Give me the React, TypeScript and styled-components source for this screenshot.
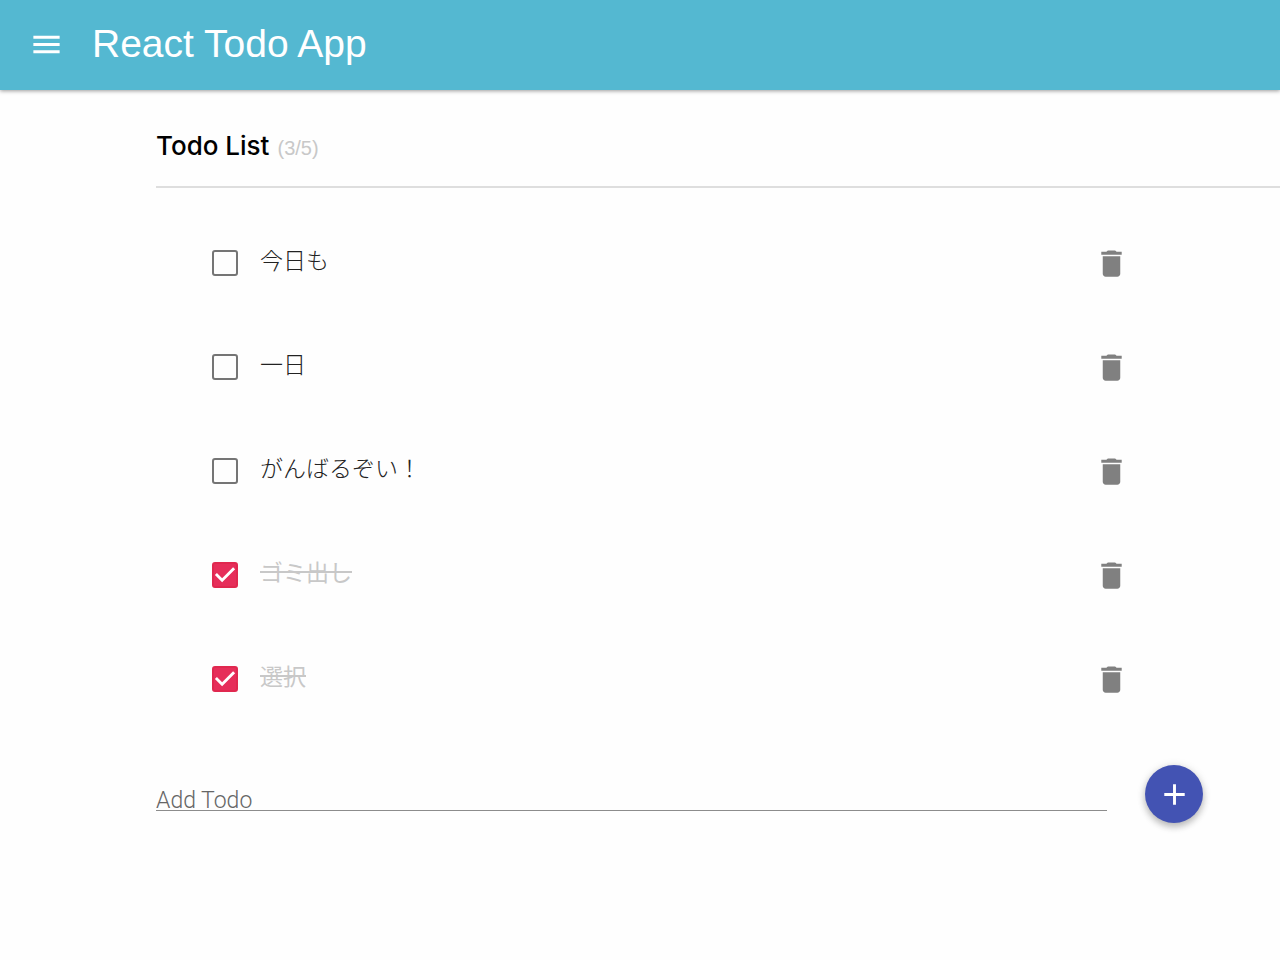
import React, { useState } from 'react';
import styled, { createGlobalStyle } from 'styled-components';

const GlobalStyle = createGlobalStyle`
  *, *::before, *::after { box-sizing: border-box; }
  body {
    margin: 0;
    background: #fefefe;
    color: #222;
    font-family: "Liberation Sans", "Noto Sans CJK JP", sans-serif;
  }
`;

const AppBar = styled.header`
  display: flex;
  align-items: center;
  gap: 28px;
  height: 90px;
  padding: 0 28px 2px;
  background: #54b8d1;
  color: #fff;
  box-shadow: 0 1px 4px rgba(0, 0, 0, 0.4);
`;

const AppTitle = styled.h1`
  margin: 0;
  font-size: 39px;
  line-height: 44px;
  font-weight: 400;
`;

const IconButton = styled.button`
  display: flex;
  justify-content: center;
  width: 36px;
  padding: 0;
  border: 0;
  background: none;
  color: inherit;
  cursor: pointer;
`;

const DeleteButton = styled(IconButton)`
  color: #808080;
`;

const Icon = styled.svg`
  display: block;
  width: 35px;
  height: 35px;
  fill: currentColor;
`;

const Main = styled.main`
  padding-left: 156px;
`;

const ListHeader = styled.div`
  display: flex;
  align-items: baseline;
  gap: 8px;
  padding: 40px 0 24px;
  border-bottom: 2px solid #dedede;
`;

const ListTitle = styled.h2`
  margin: 0;
  font-family: Inter, sans-serif;
  font-size: 26px;
  line-height: 32px;
  font-weight: 500;
  color: #000;
`;

const Count = styled.span`
  font-size: 20px;
  color: #c8c8c8;
`;

const List = styled.ul`
  margin: 0;
  padding: 23px 151px 22px 56px;
  list-style: none;
`;

const Item = styled.li`
  display: flex;
  align-items: center;
  justify-content: space-between;
  height: 104px;
`;

const ItemLabel = styled.label`
  display: flex;
  align-items: center;
  gap: 22px;
  cursor: pointer;
`;

const CheckWrap = styled.span`
  display: grid;
  width: 26px;
  height: 26px;

  > * { grid-area: 1 / 1; }
`;

const Checkbox = styled.input`
  appearance: none;
  width: 26px;
  height: 26px;
  margin: 0;
  border: 2px solid #757575;
  border-radius: 3px;
  background: transparent;

  &:checked {
    border-color: #e0284f;
    background: #e62e5a;
  }
`;

const CheckMark = styled.svg`
  width: 26px;
  height: 26px;
  fill: #fff;
  pointer-events: none;
`;

const ItemText = styled.span<{ $done: boolean }>`
  padding-bottom: 8px;
  font-family: "Noto Sans CJK JP", sans-serif;
  font-size: 23px;
  line-height: 32px;
  font-weight: ${({ $done }) => ($done ? 400 : 300)};
  color: ${({ $done }) => ($done ? '#c8c8c8' : '#222')};
  text-decoration: ${({ $done }) => ($done ? 'line-through' : 'none')};
  text-decoration-thickness: 2px;
`;

const AddForm = styled.form`
  display: flex;
  align-items: center;
  gap: 38px;
  padding: 12px 77px 48px 0;
`;

const AddInput = styled.input`
  flex: 1;
  min-width: 0;
  height: 34px;
  padding: 13px 0 0;
  border: 0;
  border-bottom: 1px solid #8c8c8c;
  outline: 0;
  background: transparent;
  color: #222;
  font-family: Roboto, "Noto Sans CJK JP", sans-serif;
  font-size: 23px;
  line-height: 24px;
  font-weight: 300;

  &::placeholder { color: #666; opacity: 1; }
`;

const AddButton = styled.button`
  display: flex;
  align-items: center;
  justify-content: center;
  width: 58px;
  height: 58px;
  padding: 0;
  border: 0;
  border-radius: 50%;
  background: #4353b3;
  color: #fff;
  box-shadow: 0 4px 7px rgba(0, 0, 0, 0.22), 0 1px 10px rgba(0, 0, 0, 0.12);
  cursor: pointer;
`;

interface Todo {
  id: number;
  text: string;
  done: boolean;
}

const initialTodos: Todo[] = [
  { id: 1, text: '今日も', done: false },
  { id: 2, text: '一日', done: false },
  { id: 3, text: 'がんばるぞい！', done: false },
  { id: 4, text: 'ゴミ出し', done: true },
  { id: 5, text: '選択', done: true },
];

export default function App() {
  const [todos, setTodos] = useState(initialTodos);
  const [draft, setDraft] = useState('');

  const toggle = (id: number) =>
    setTodos(todos.map(t => (t.id === id ? { ...t, done: !t.done } : t)));
  const remove = (id: number) => setTodos(todos.filter(t => t.id !== id));
  const add = (event: React.FormEvent) => {
    event.preventDefault();
    if (!draft.trim()) return;
    setTodos([...todos, { id: Date.now(), text: draft, done: false }]);
    setDraft('');
  };

  return (
    <>
      <GlobalStyle />
      <AppBar>
        <IconButton type="button" aria-label="Menu">
          <Icon viewBox="0 0 24 24"><path d="M3 18h18v-2H3v2zm0-5h18v-2H3v2zm0-7v2h18V6H3z" /></Icon>
        </IconButton>
        <AppTitle>React Todo App</AppTitle>
      </AppBar>
      <Main>
        <ListHeader>
          <ListTitle>Todo List</ListTitle>
          <Count>({todos.filter(t => !t.done).length}/{todos.length})</Count>
        </ListHeader>
        <List>
          {todos.map(todo => (
            <Item key={todo.id}>
              <ItemLabel>
                <CheckWrap>
                  <Checkbox type="checkbox" checked={todo.done} onChange={() => toggle(todo.id)} />
                  {todo.done && (
                    <CheckMark viewBox="3 3 18 18">
                      <path d="M10 17l-5-5 1.41-1.41L10 14.17l7.59-7.59L19 8l-9 9z" />
                    </CheckMark>
                  )}
                </CheckWrap>
                <ItemText $done={todo.done}>{todo.text}</ItemText>
              </ItemLabel>
              <DeleteButton type="button" aria-label={`Delete ${todo.text}`} onClick={() => remove(todo.id)}>
                <Icon viewBox="0 0 24 24">
                  <path d="M6 19c0 1.1.9 2 2 2h8c1.1 0 2-.9 2-2V7H6v12zM19 4h-3.5l-1-1h-5l-1 1H5v2h14V4z" />
                </Icon>
              </DeleteButton>
            </Item>
          ))}
        </List>
        <AddForm onSubmit={add}>
          <AddInput
            aria-label="Add Todo"
            placeholder="Add Todo"
            value={draft}
            onChange={event => setDraft(event.target.value)}
          />
          <AddButton type="submit" aria-label="Add">
            <Icon viewBox="0 0 24 24"><path d="M19 13h-6v6h-2v-6H5v-2h6V5h2v6h6v2z" /></Icon>
          </AddButton>
        </AddForm>
      </Main>
    </>
  );
}
